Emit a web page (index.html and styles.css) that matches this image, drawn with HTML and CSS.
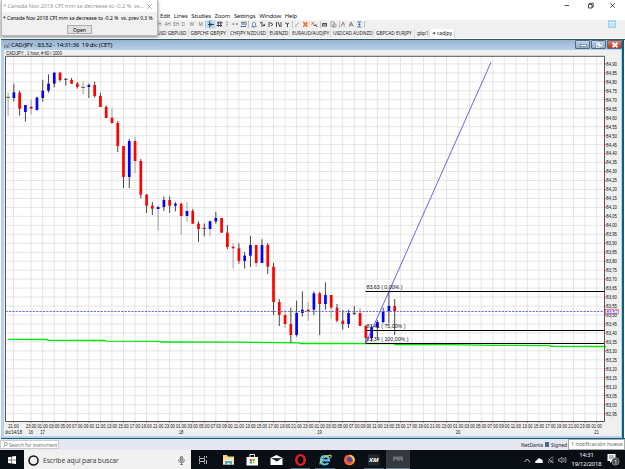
FILE: index.html
```html
<!DOCTYPE html>
<html lang="es">
<head>
  <meta charset="UTF-8" />
  <title>CAD/JPY - NetStation</title>
  <link rel="stylesheet" href="styles.css">
</head>
<body>
  <div class="top">
    <div class="window-buttons">
      <svg width="55" height="10" viewBox="560 0 55 10">
        <path d="M564.5 5.5h4.5M588.5 4.5h3.5v3.500h-3.500zM589.500 4.500v-1.200h3.700v3.700h-1.200M610.300 3.300l4.400 4.400M614.700 3.300l-4.400 4.400" fill="none" stroke="#222" stroke-width=".8"/>
      </svg>
    </div>
    <div class="menu">
      <span>Edit</span><span>Lines</span><span>Studies</span><span>Zoom</span><span>Settings</span><span>Window</span><span>Help</span>
    </div>
    <div class="toolbar">
      <svg class="tools" width="215" height="9" viewBox="155 20 215 9">
        <rect x="206.500" y="20" width="9" height="8.500" fill="#b4dcf6"/>
        <g class="tool-text">
          <text x="158">H</text><text x="164.500">4H</text><text x="173">8H</text><text x="181.500">D</text><text x="189.500">W</text><text x="198.500">M</text>
        </g>
        <path d="M205.500 21v7M248.500 21v7M292.500 21v7M320.500 21v7M339.500 21v7M364.500 21v7" stroke="#aaa" stroke-width=".7"/>
        <path d="M208 24.500h6M209.700 21v6.500M211 23.200v2.600M217 22.800h5.500M216.500 25.500h5.500M218.200 21.300v5.700M220.800 21.300v5.700" stroke="#333" stroke-width=".9"/>
        <path d="M227 21.500v5" stroke="#888" stroke-width="1" stroke-dasharray="1.500 .6"/>
        <path d="M232.500 24h1.800M236 24h1.800M262 22v5M260 23l2-1M265 24l-2 1.500h2M269 22v5M270 22.500l3 2-2 1.500M276.500 22v5M278 22l2 5M281 22v5M285 22.500l2 1.500 2-1M287.500 24v3" fill="none" stroke="#333" stroke-width=".9"/>
        <path d="M241 22.300h4M241 24h4M246 21.500v4M240.500 26.500h5.500" stroke="#536e9c" stroke-width="1"/>
        <path d="M251.500 26.500h5l-1-1.200v-2.300q-1.500-2-3 0v2.300zM253.300 27.300h1.500" fill="#eef5ff" stroke="#48679b" stroke-width=".7"/>
        <path d="M295 25.500l4.500-3M295 27l2-1" stroke="#aaa" stroke-width=".8"/>
        <path d="M303.300 22l4.200 4.700M307.500 22l-4.200 4.700" stroke="#f26a24" stroke-width="1.500"/>
        <path d="M311.500 22l2.500 2.800M314 22l-2.500 2.800" stroke="#f26a24"/><path d="M313.500 25.500h2.500M315.500 24l1.500 3" stroke="#555" stroke-width=".9"/>
        <rect x="322" y="23" width="5" height="3.500" fill="#555"/><path d="M323 22h3M323 25h3" stroke="#ddd"/>
        <path d="M331 21.800h3v5h-3zM333 24h3v3h-3z" fill="#eee" stroke="#777" stroke-width=".6"/>
        <path d="M341 26.500l2.200-4.500 1.300 2.800M349 26.500l2.200-4.500 2 4.500M350 25h2.300" fill="none" stroke="#666" stroke-width=".8"/><path d="M343 24.500l2.200 2.200" stroke="#d65b4a" stroke-width=".8"/>
        <path d="M357 22h4.500M357 27h4.500M359.300 22v5M358 24.500h2.500" stroke="#39689b" stroke-width=".8"/>
      </svg>
      <span class="corner-tool"><svg width="4" height="4"><rect x=".5" y=".5" width="3" height="3" fill="none" stroke="#fff" stroke-width=".8"/></svg></span>
    </div>
    <div class="tabs">
      <span class="tab tab-first">USD GBPUSD</span>
      <span class="tab">GBPCHF GBPJPY</span>
      <span class="tab">CHFJPY NZDUSD</span>
      <span class="tab tab-short">EURNZD</span>
      <span class="tab tab-wide">EURAUD/AUDJPY</span>
      <span class="tab tab-wider">USDCAD AUDNZD</span>
      <span class="tab tab-wide">GBPCAD EURJPY</span>
      <span class="tab tab-gbp">gbp1</span>
      <span class="tab tab-active">✶ cadjpy</span>
    </div>

    <div class="alert">
      <div class="alert-title"><span>* Canada Nov 2018 CPI mm sa decrease to -0.2 %&nbsp; vs...</span>
        <svg width="5" height="5" viewBox="0 0 5 5"><path d="M.3 .3l4.400 4.400M4.700 .3l-4.400 4.400" stroke="#888" stroke-width=".7"/></svg>
      </div>
      <div class="alert-text">* Canada Nov 2018 CPI mm sa decrease to -0.2 %&nbsp; vs. prev 0.3 %</div>
      <button>Open</button>
    </div>
  </div>

  <div class="chart-window">
    <div class="titlebar">
      <svg width="6" height="5" viewBox="0 0 6 5"><path d="M.5 2v3M2 1v4M3.500 2v3M5 0v5" stroke="#5b6f87" stroke-width=".8"/></svg>
      <span class="title">CAD/JPY - 83,52 - 14:31:36&nbsp; 19 dic (CET)</span>
      <div class="frame-buttons">
        <span class="frame-btn"><svg width="14" height="8"><rect x="4.500" y="3.500" width="6" height="2" fill="#fff" stroke="#546b85" stroke-width=".6"/></svg></span>
        <span class="frame-btn"><svg width="14" height="8"><path d="M6.500 1h4v3.500h-4zM4 3h4v3.500h-4z" fill="#9eb8d3" stroke="#fff" stroke-width="1"/><path d="M6 .5h5v4.500M3.500 2.500v4.500h5" fill="none" stroke="#546b85" stroke-width=".5"/></svg></span>
        <span class="frame-btn frame-close"><svg width="14" height="8"><path d="M4.500 1.800l5 4.400M9.500 1.800l-5 4.400" stroke="#fff" stroke-width="1.800"/></svg></span>
      </div>
    </div>
    <svg id="chart" class="chart" width="617" height="386" viewBox="4 50 617 386"></svg>
  </div>

  <div class="status">
    <div class="search-box">
      <svg width="5" height="6" viewBox="0 0 5 6"><circle cx="3" cy="2" r="1.500" fill="none" stroke="#888" stroke-width=".7"/><path d="M2 3L.3 5.300" stroke="#888" stroke-width=".7"/></svg>
      <span>Search for instrument</span>
    </div>
    <div class="status-right">
      <span>NetDania</span><i></i><span>Signed i</span>
    </div>
    <div class="tooltip">1 notificación nueva</div>
  </div>

  <div class="taskbar">
    <div class="start">
      <svg width="8" height="8" viewBox="0 0 8 8"><path d="M0 1.200l3.500-.5v3.100H0zM4 .6L8 0v3.800H4zM0 4.300h3.500v3.100L0 6.900zM4 4.300h4V8l-4-.6z" fill="#fff"/></svg>
    </div>
    <div class="cortana">
      <svg width="11" height="11" viewBox="0 0 11 11"><circle cx="5.500" cy="5.500" r="4.500" fill="none" stroke="#111" stroke-width="1.500"/></svg>
      <span>Escribe aquí para buscar</span>
      <svg width="7" height="9" viewBox="0 0 7 9"><rect x="2.200" y=".4" width="2.600" height="5" rx="1.300" fill="#aaa" stroke="#555" stroke-width=".7"/><path d="M.7 3.500v1q0 2.200 2.800 2.200T6.300 4.500v-1M3.500 6.700V8.500M2 8.500h3" fill="none" stroke="#555" stroke-width=".7"/></svg>
    </div>
    <svg class="apps" width="220" height="20" viewBox="191 449 220 20">
      <rect x="386" y="449" width="24" height="20" fill="#35383d"/>
      <path d="M291 468.200h19M315 468.200h20M364 468.200h20M386 468.200h24" stroke="#8cc7ee" stroke-width="1.400"/>
      <path d="M199.500 455v1.500M199.500 457.500v3M199.500 461.500v1.500M204.500 455v1.500M204.500 461.500v1.500M199.500 457.500h5v3h-5M206.500 455v2M206.500 459v4" fill="none" stroke="#ccc" stroke-width=".9"/>
      <path d="M223 454h4l1 1.500h6v8h-11z" fill="#f3d583"/><path d="M223 457h11v6.500h-11z" fill="#fae8a6"/><path d="M225 464v-4h7v4h-2v-2h-3v2z" fill="#4aa9dc"/>
      <path d="M246.500 456h11.500v8.500h-11.500z" fill="#fff"/><path d="M250 456v-2.500h4.500v2.500" fill="none" stroke="#fff" stroke-width=".9"/>
      <path d="M249.800 458h2.200v2h-2.200z" fill="#f25022"/><path d="M252.500 458h2.200v2h-2.200z" fill="#7fba00"/><path d="M249.800 460.500h2.200v2h-2.200z" fill="#00a4ef"/><path d="M252.500 460.500h2.200v2h-2.200z" fill="#ffb900"/>
      <path d="M270.500 457l6-3 6 3v7h-12z" fill="#fff"/><path d="M271 457l6 3.500 5-3.500-3.500.3z" fill="#111820"/>
      <ellipse cx="300.500" cy="459" rx="4.200" ry="4.700" fill="none" stroke="#e32020" stroke-width="2.600"/><ellipse cx="300.500" cy="459" rx="2" ry="3.800" fill="#0a0e14"/>
      <path d="M328.300 462q-1.500 1.500-3.300 1.500-4 0-4-4.200t4-4.200q4 0 4 4.300h-7" fill="none" stroke="#52c2ef" stroke-width="2.200"/><path d="M320 463.500q-1-2.500 3-6t8-3.500q.8 1-.5 3" fill="none" stroke="#f4d03f" stroke-width="1"/>
      <circle cx="349.500" cy="459" r="5.300" fill="#ff8a1c"/><path d="M344.500 457q1-3 2.500-3l1 1.500q4-.8 5 2.500t-2 5q-4 2-6.500-2z" fill="#ff5b28"/><circle cx="349.800" cy="458.500" r="2.700" fill="#4a45b8"/><path d="M350 453.500q5 1.500 4.800 6l-1.800 3q1-5-3-7z" fill="#ffc83a"/>
      <rect x="368" y="453.500" width="11.500" height="11" fill="#25282b"/><text class="xm" x="369" y="461.200" textLength="9.500" lengthAdjust="spacingAndGlyphs">XM</text>
      <path d="M393 455.500h10v5l-2.500-2-2 2-3-2.500-2.500 3z" fill="#6c7074"/>
    </svg>
    <div class="tray">
      <svg width="46" height="8" viewBox="519 455 46 8">
        <path d="M519.500 461l2.800-3 2.800 3" fill="none" stroke="#ddd" stroke-width=".9"/>
        <path d="M530.500 462q-1-2.500 1.500-2.800 1.500-3.500 4-1 2 .2 1.700 2 1 1.500-.7 1.800z" fill="#fff"/>
        <path d="M543.500 462q0-5 5-6M545.500 462q0-3 3-4M547 462q0-1.500 1.500-2M543.500 458l5 4" fill="none" stroke="#999" stroke-width=".8"/>
        <path d="M553.500 458h1.500l2-1.800v5.600l-2-1.800h-1.500zM558.500 457q1.500 2 0 4M560 456q2.300 3 0 6" fill="none" stroke="#ccc" stroke-width=".7"/>
      </svg>
      <div class="clock"><span>14:31</span><span>19/12/2018</span></div>
      <svg width="13" height="14" viewBox="0 0 13 14"><path d="M.5 1h8v7H5L3 10V8H.5z" fill="#fff"/><path d="M2 3h5M2 5h5" stroke="#333" stroke-width=".7"/><circle cx="8.500" cy="8.500" r="3.700" fill="#4b4e53" stroke="#aaa" stroke-width=".6"/><text class="badge" x="7.300" y="10.500">1</text></svg>
    </div>
  </div>
  <script src="chart.js"></script>
</body>
</html>
```
FILE: styles.css
```css
* {
  box-sizing: border-box;
}

body {
  margin: 0;
  width: 625px;
  height: 469px;
  display: flex;
  flex-direction: column;
  overflow: hidden;
  background-color: #fff;
  font-family: "Noto Sans", sans-serif;
  color: #222;
}

svg {
  display: block;
  flex: none;
}

.top {
  position: relative;
  height: 39px;
  flex: none;
  background-color: #fff;
}

.window-buttons {
  height: 12px;
  padding-right: 10px;
  display: flex;
  justify-content: flex-end;
}

.menu {
  height: 8px;
  padding-left: 160px;
  display: flex;
  gap: 3.7px;
  font-size: 6px;
  line-height: 9px;
  letter-spacing: -0.16px;
}

.toolbar {
  height: 9px;
  padding-left: 155px;
  padding-right: 9px;
  display: flex;
  justify-content: space-between;
  background-color: #f0f0f0;
}

.tool-text {
  font-size: 4.8px;
  fill: #777;
  transform: translateY(26px);
}

.corner-tool {
  width: 8px;
  height: 8px;
  display: flex;
  align-items: center;
  justify-content: center;
  background-color: #a9d5f3;
}

.tabs {
  height: 10px;
  padding-left: 155px;
  display: flex;
  align-items: flex-end;
  background-color: #f0f0f0;
  border-bottom: 1px solid #fff;
}

.tab {
  width: 39.5px;
  height: 9px;
  padding-left: 2px;
  border-right: 1px solid #dcdcdc;
  font-size: 4.8px;
  line-height: 9px;
  letter-spacing: -0.06px;
  white-space: nowrap;
}

.tab-first {
  width: 33.5px;
}

.tab-short {
  width: 22.5px;
}

.tab-wide {
  width: 41px;
}

.tab-wider {
  width: 43px;
}

.tab-gbp {
  width: 14.5px;
}

.tab-active {
  width: 25px;
  background-color: #fff;
  font-size: 5.2px;
}

.alert {
  position: absolute;
  left: 1px;
  top: 0;
  width: 157px;
  height: 36px;
  background-color: #f0f0f0;
  border: 1px solid #bbb;
  border-top: none;
  box-shadow: 0 1px 3px rgba(0, 0, 0, 0.45);
  display: flex;
  flex-direction: column;
  align-items: center;
}

.alert-title {
  width: 100%;
  height: 12px;
  padding: 0 5px 0 1px;
  display: flex;
  align-items: center;
  justify-content: space-between;
  background-color: #fff;
  color: #999;
  font-size: 5.8px;
  letter-spacing: -0.12px;
  white-space: nowrap;
}

.alert-text {
  width: 100%;
  padding-left: 1px;
  height: 13px;
  font-size: 5px;
  line-height: 12px;
  color: #000;
  white-space: nowrap;
}

.alert button {
  width: 25px;
  height: 9px;
  padding: 0;
  border: 1px solid #adadad;
  background-color: #e1e1e1;
  font-family: inherit;
  font-size: 5px;
  line-height: 6px;
}

.chart-window {
  height: 400px;
  flex: none;
  margin-left: 1px;
  padding-left: 3px;
  background: linear-gradient(90deg, #b9d1ea 621px, #0c6178 621px, #0c6178 623px, #fff 623px);
  border-top: 1px solid #31566d;
  border-bottom: 1px solid #0c6178;
}

.titlebar {
  height: 10px;
  margin-left: -3px;
  margin-right: 3px;
  padding-left: 3px;
  display: flex;
  align-items: center;
  background: linear-gradient(#9ab3cf, #b7d0ec);
}

.title {
  margin-left: 1px;
  font-size: 6.1px;
  line-height: 10px;
  letter-spacing: -0.2px;
  color: #000;
}

.frame-buttons {
  margin-left: auto;
  align-self: flex-start;
  display: flex;
  gap: 1px;
}

.frame-btn {
  width: 15px;
  height: 9px;
  border: 0.5px solid #536a82;
  border-radius: 1px;
  background: linear-gradient(#c2d5e9, #91aac6);
}

.frame-close {
  background: linear-gradient(#dd8170, #b93622);
}

.chart {
  background-color: #f0f0f0;
}

.chart text {
  font-family: "Liberation Sans", sans-serif;
  font-size: 5.3px;
  fill: #111;
}

.chart .last-price {
  fill: #2222dd;
}

.status {
  position: relative;
  height: 11px;
  flex: none;
  display: flex;
  align-items: center;
  justify-content: space-between;
  background-color: #e7e7f4;
  font-size: 5px;
}

.search-box {
  width: 59px;
  height: 9px;
  padding-left: 2px;
  display: flex;
  align-items: center;
  gap: 1px;
  background-color: #fff;
  border: 1px solid #ccc;
  color: #777;
  font-size: 4.8px;
  letter-spacing: -0.05px;
  white-space: nowrap;
}

.status-right {
  width: 104px;
  display: flex;
  align-items: center;
  gap: 2px;
}

.status-right i {
  width: 4px;
  height: 5px;
  background-color: #43699b;
}

.tooltip {
  position: absolute;
  right: 0;
  top: 0;
  width: 57px;
  height: 11px;
  padding-left: 2px;
  background-color: #fff;
  border: 1px solid #aaa;
  color: #666;
  font-size: 5.5px;
  line-height: 9px;
  white-space: nowrap;
}

.taskbar {
  height: 20px;
  flex: none;
  display: flex;
  align-items: center;
  background-color: #0a0e15;
  color: #fff;
}

.start {
  width: 24px;
  padding-left: 8px;
}

.cortana {
  width: 167px;
  height: 20px;
  padding: 0 6px 0 4px;
  display: flex;
  align-items: center;
  background-color: #f1f1f1;
  color: #444;
  font-size: 6.8px;
  letter-spacing: -0.1px;
}

.cortana span {
  flex: 1;
  margin-left: 4px;
}

.xm {
  font-size: 5.5px;
  font-weight: bold;
  font-style: italic;
  fill: #fff;
}

.tray {
  margin-left: auto;
  padding-right: 5px;
  display: flex;
  align-items: center;
}

.clock {
  width: 33px;
  margin-right: 4px;
  display: flex;
  flex-direction: column;
  align-items: center;
  font-size: 5.8px;
  line-height: 9px;
  letter-spacing: -0.08px;
}

.badge {
  font-size: 5px;
  fill: #fff;
}
```
FILE: chart.js
```js
const NS = 'http://www.w3.org/2000/svg';
const chart = document.getElementById('chart');
const LEFT = 5.5, TOP = 56.5, RIGHT = 604.5, BOTTOM = 421.5;
const HOUR = 5.77;

function add(name, attrs, text) {
  const el = document.createElementNS(NS, name);
  for (const key in attrs) el.setAttribute(key, attrs[key]);
  if (text) el.textContent = text;
  chart.appendChild(el);
  return el;
}

function line(x1, y1, x2, y2, stroke, width, extra) {
  return add('line', Object.assign({ x1, y1, x2, y2, stroke, 'stroke-width': width }, extra));
}

function label(x, y, text, length, extra) {
  return add('text', Object.assign({ x, y, textLength: length, lengthAdjust: 'spacingAndGlyphs' }, extra), text);
}

// high, open/close top, open/close bottom, low, in thirds of a pixel under y = 55
const candles = [
  'd 113 127 127 183', 'b 86 112 129 140', 'r 107 113 161 182', 'b 150 150 171 200', 'r 133 155 161 179',
  'b 125 128 165 167', 'b 74 107 129 140', 'b 58 86 107 113', 'b 52 53 86 97', 'r 52 53 75 80',
  'd 69 73 73 92', 'r 69 75 86 87', 'r 81 86 96 101', 'd 80 97 97 118', 'b 86 90 96 129',
  'r 80 90 123 128', 'r 113 123 156 156', 'r 151 156 189 189', 'r 160 188 204 207', 'r 198 204 273 291',
  'r 273 273 366 399', 'b 252 258 366 399', 'r 246 258 318 355', 'r 312 318 419 430', 'r 417 419 452 474',
  'r 441 452 461 480', 'b 450 456 462 527', 'b 424 435 456 468', 'r 424 435 452 474', 'b 441 446 452 469',
  'r 442 446 483 539', 'b 441 468 483 501', 'r 462 468 506 506', 'r 499 506 522 561', 'd 505 520 520 544',
  'b 495 499 522 544', 'b 471 489 499 506', 'r 489 489 533 533', 'r 510 533 576 582', 'r 564 575 580 641',
  'r 565 580 618 626', 'b 591 602 618 641', 'b 543 570 602 636', 'r 570 570 624 636', 'b 553 570 624 624',
  'r 564 570 635 657', 'r 624 635 741 780', 'r 732 741 780 813', 'r 765 780 807 819', 'r 758 807 840 862',
  'b 737 774 840 845', 'b 709 764 774 785', 'r 742 764 769 797', 'b 709 715 764 780', 'r 711 715 747 840',
  'b 682 720 747 764', 'r 720 720 758 791', 'r 747 758 797 802', 'r 765 797 807 824', 'b 764 774 807 819',
  'd 753 775 775 780', 'r 758 774 813 813', 'r 810 813 849 864', 'b 813 817 849 859', 'b 795 801 817 851',
  'b 758 770 801 805', 'b 710 753 768 805', 'r 732 753 769 840'
];

const softWicks = [0, 4, 13, 18, 22, 26, 30, 31, 35, 39, 43, 48, 52, 56, 61];

add('rect', { x: LEFT, y: TOP, width: RIGHT - LEFT, height: BOTTOM - TOP, fill: '#fff' });

// price scale
for (let i = 0; i < 40; i++) {
  const y = 63.9 + i * 8.968;
  line(LEFT, y, RIGHT, y, '#e2e2e2', 0.9);
  line(RIGHT, y, RIGHT + 2, y, '#e44', 0.8);
  label(606.3, y + 1.9, (84.9 - i * 0.05).toFixed(2).replace('.', ','), 10.7);
}

// time scale
const hours = [[13.5, '21:00']];
for (let i = 0; i < 50; i++) {
  const h = (23 + i * 2) % 24;
  hours.push([31.15 + i * HOUR * 2, String(h).padStart(2, '0') + ':00']);
}
hours.forEach(([x, text]) => {
  line(x, TOP, x, BOTTOM, '#e2e2e2', 0.9);
  line(x, BOTTOM, x, BOTTOM + 1.5, '#e44', 0.8);
  label(x - 5.2, 427.7, text, 10.4);
});
label(5, 433.7, 'dic/14/18', 17);
[[30.7, '16'], [42.5, '17'], [181, '18'], [319.6, '19'], [458, '20'], [596.5, '21']].forEach(([x, day]) => {
  label(x - 2.3, 433.7, day, 4.6);
});

// trend line
add('polyline', {
  points: '8,339.4 47,339.5 48,340.3 105,340.5 106,341.2 160,341.3 161,342 230,342.2 299,342.8 300,343.5 394,343.7 395,344.5 450,344.7 495,345.4 550,345.6 551,346.4 606,346.5',
  fill: 'none', stroke: '#00e600', 'stroke-width': 1.3
});

candles.forEach((row, i) => {
  const parts = row.split(' ');
  const [high, top, bottom, low] = parts.slice(1).map(v => 55 + v / 3);
  const x = 8.1 + i * HOUR;
  line(x, high, x, low, softWicks.includes(i) ? '#999' : '#333', 0.9);
  if (parts[0] === 'd') {
    line(x - 1.9, top, x + 1.9, top, '#444', 0.9);
  } else {
    add('rect', { x: x - 1.35, y: top, width: 2.7, height: bottom - top, fill: parts[0] === 'b' ? '#0000ff' : '#ff0000' });
  }
});

// retracement levels
[[291.5, '83,63 ( 0,00% )', 36], [330.5, '83,41 ( 75,00% )', 39], [343.5, '83,34 ( 100,00% )', 42]].forEach(([y, text, length]) => {
  line(365.5, y, RIGHT, y, '#000', 1);
  label(366.5, y - 2.7, text, length);
});
line(366, 343, 491, 62.3, '#2222ee', 0.7);
line(LEFT, 311.5, RIGHT, 311.5, '#5a5ad0', 0.9, { 'stroke-dasharray': '2.2 1.2' });

add('path', { d: `M${LEFT} ${BOTTOM}V56.3H${RIGHT}V${BOTTOM}Z`, fill: 'none', stroke: '#555', 'stroke-width': 1 });
add('rect', { x: 605.6, y: 309.3, width: 13, height: 4.7, fill: '#fff', stroke: '#e55', 'stroke-width': 0.7 });
label(606.5, 313.5, '83,52', 11, { class: 'last-price' });
label(6, 54.9, 'CAD/JPY , 1 hour, # 60 / 1000', 56);
```
